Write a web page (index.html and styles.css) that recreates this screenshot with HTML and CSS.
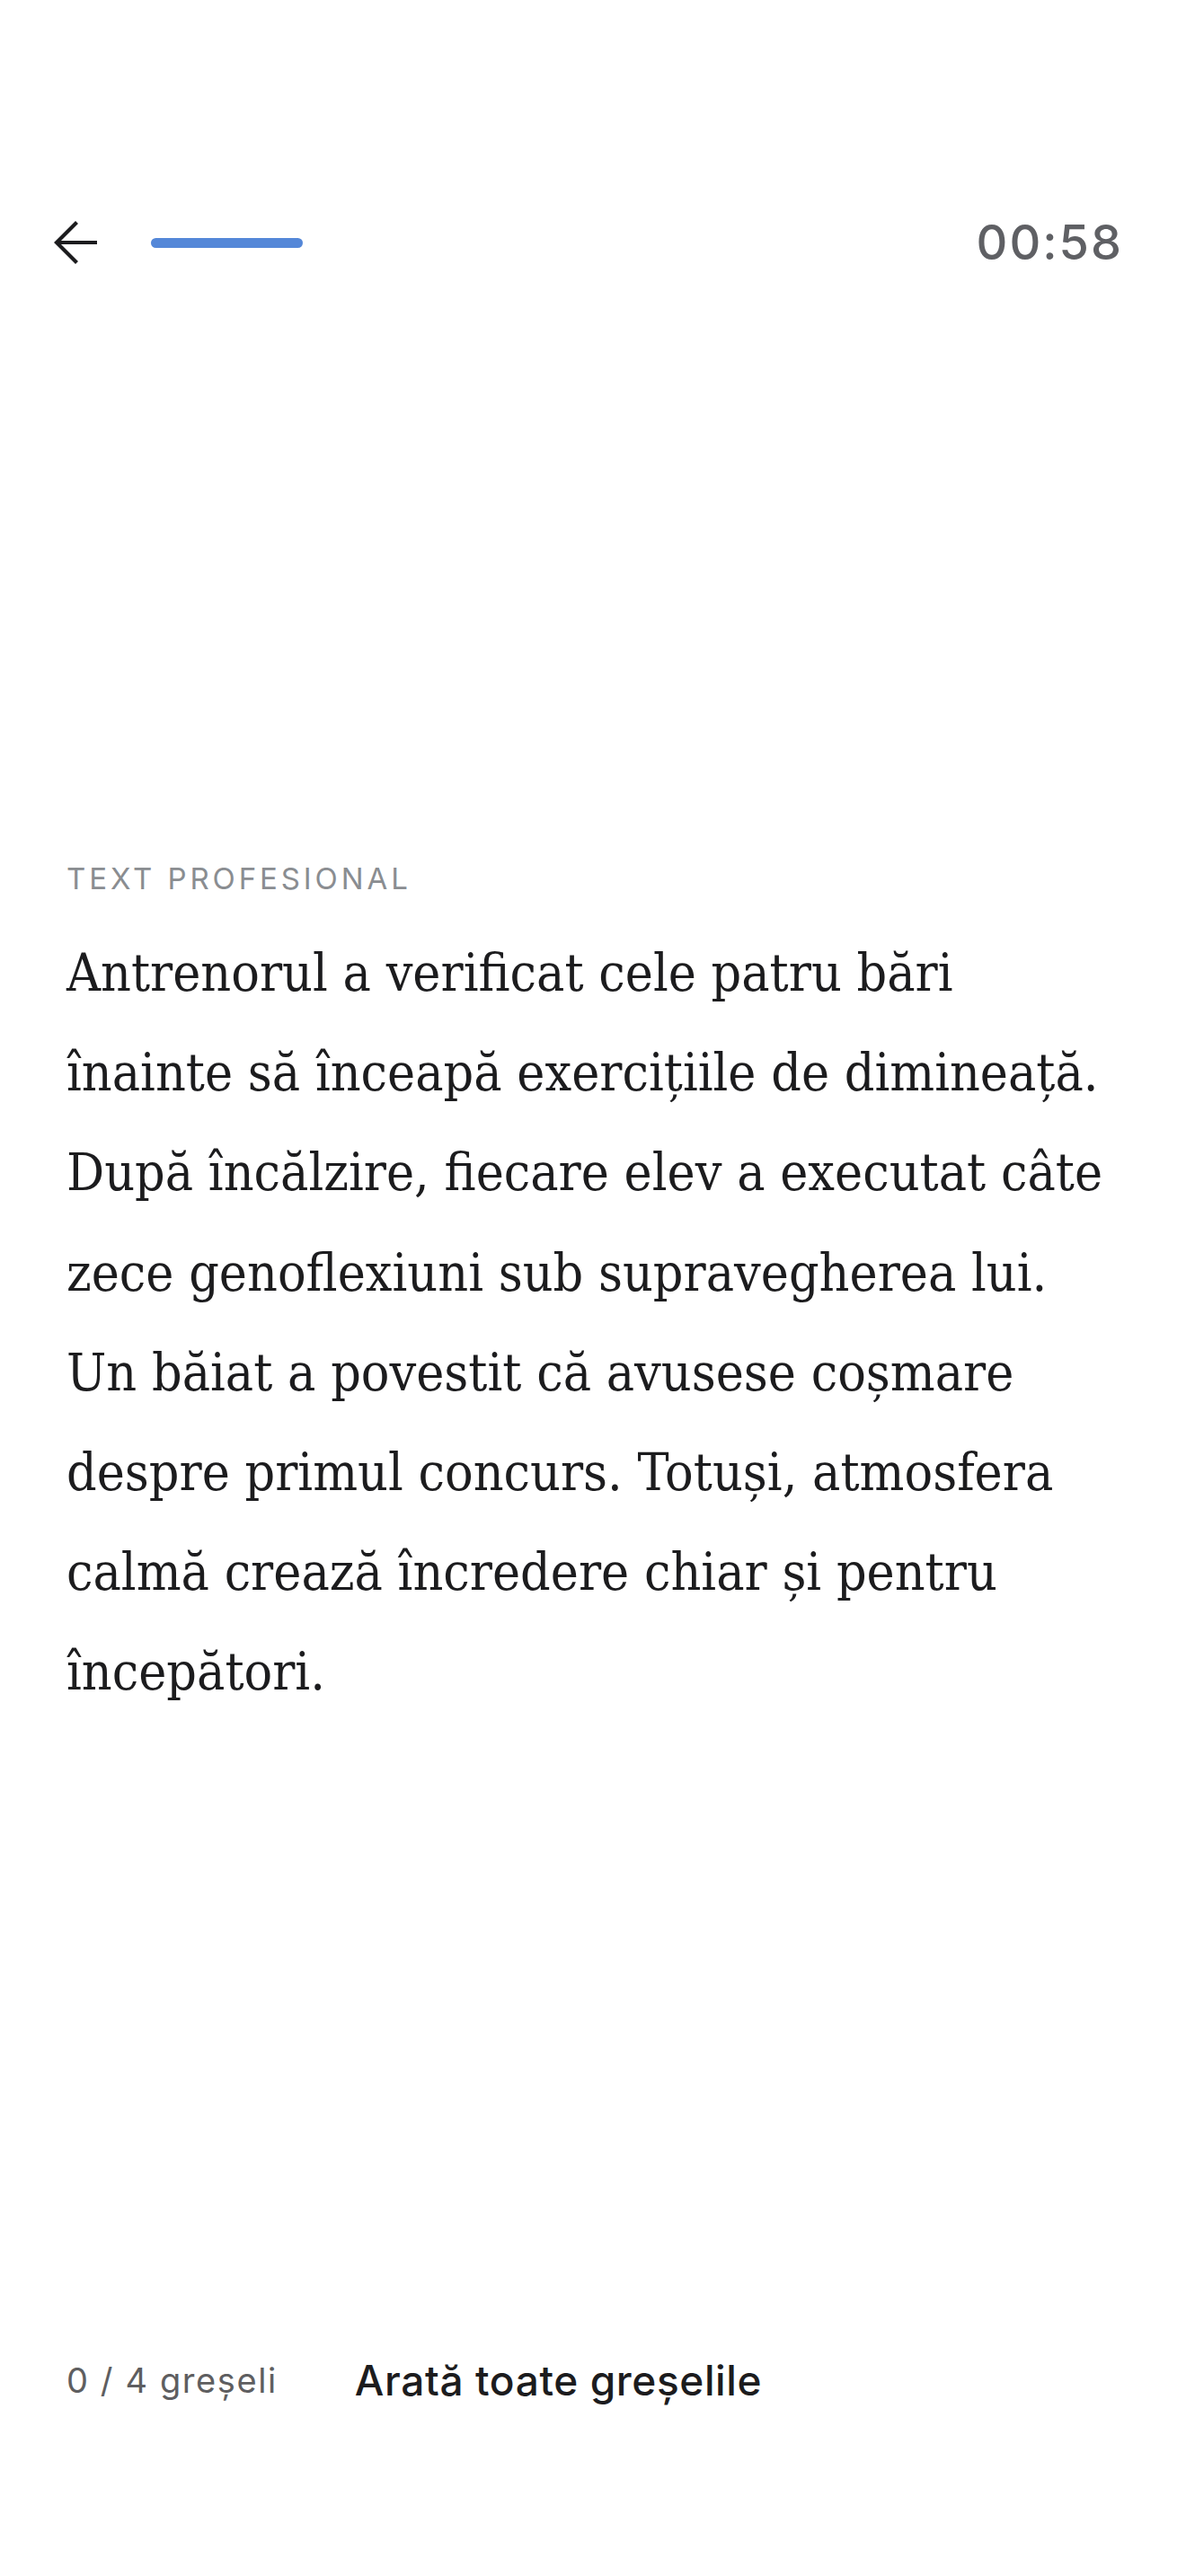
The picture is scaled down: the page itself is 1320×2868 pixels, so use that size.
FILE: index.html
```html
<!DOCTYPE html>
<html lang="ro">
<head>
<meta charset="utf-8">
<title>Text profesional</title>
<link rel="stylesheet" href="styles.css">
</head>
<body>
<div class="screen">
  <header class="topbar">
    <button class="back" aria-label="Înapoi">
      <svg class="back-icon" width="56" height="56" viewBox="0 0 56 56" fill="none" stroke="#1c1c1e" stroke-width="4.2" stroke-linecap="butt" stroke-linejoin="miter">
        <path d="M50 28H5"/>
        <path d="M27.5 5.5L5 28l22.5 22.5"/>
      </svg>
    </button>
    <div class="progress"></div>
    <div class="timer">00:58</div>
  </header>

  <main class="content">
    <div class="label">TEXT PROFESIONAL</div>
    <p class="passage">Antrenorul a verificat cele patru bări<br>înainte să înceapă exercițiile de dimineață.<br>După încălzire, fiecare elev a executat câte<br>zece genoflexiuni sub supravegherea lui.<br>Un băiat a povestit că avusese coșmare<br>despre primul concurs. Totuși, atmosfera<br>calmă crează încredere chiar și pentru<br>începători.</p>
  </main>

  <footer class="bottombar">
    <span class="count">0 / 4 greșeli</span>
    <button class="show-all">Arată toate greșelile</button>
  </footer>
</div>
</body>
</html>
```

FILE: styles.css
```css
html, body {
  margin: 0;
  padding: 0;
  background: #ffffff;
}

.screen {
  min-height: 100vh;
  display: flex;
  flex-direction: column;
  font-family: Inter, "Noto Sans", sans-serif;
}

.topbar {
  display: flex;
  align-items: center;
  height: 144px;
  padding: 198px 74px 0 58px;
}

.back {
  border: 0;
  background: none;
  padding: 0;
  margin: 0;
  width: 56px;
  height: 56px;
  display: flex;
}

.back-icon {
  display: block;
}

.progress {
  width: 169px;
  height: 11px;
  border-radius: 6px;
  background: #5487d8;
  margin-left: 54px;
}

.timer {
  margin-left: auto;
  font-size: 54px;
  line-height: 64px;
  letter-spacing: 2px;
  color: #5f6064;
  font-weight: 500;
  margin-right: -4px;
}

.content {
  flex: 1;
  padding: 616px 74px 0 74px;
}

.label {
  font-size: 33px;
  line-height: 40px;
  letter-spacing: 3.9px;
  color: #8a8d91;
  font-weight: 400;
}

.passage {
  margin: 30px 0 0 0;
  font-family: "DejaVu Serif Condensed", "Liberation Serif", serif;
  font-stretch: condensed;
  font-size: 58.5px;
  line-height: 111.2px;
  color: #1c1c1e;
  white-space: nowrap;
}

.bottombar {
  display: flex;
  align-items: center;
  height: 120px;
  padding: 0 74px 158px 74px;
  gap: 86px;
}

.count {
  font-size: 38px;
  color: #5e5e60;
  letter-spacing: 1.6px;
}

.show-all {
  border: 0;
  background: none;
  padding: 0;
  font-family: Inter, "Noto Sans", sans-serif;
  font-size: 46px;
  font-weight: 500;
  letter-spacing: 0.6px;
  color: #1c1c1e;
}
```
